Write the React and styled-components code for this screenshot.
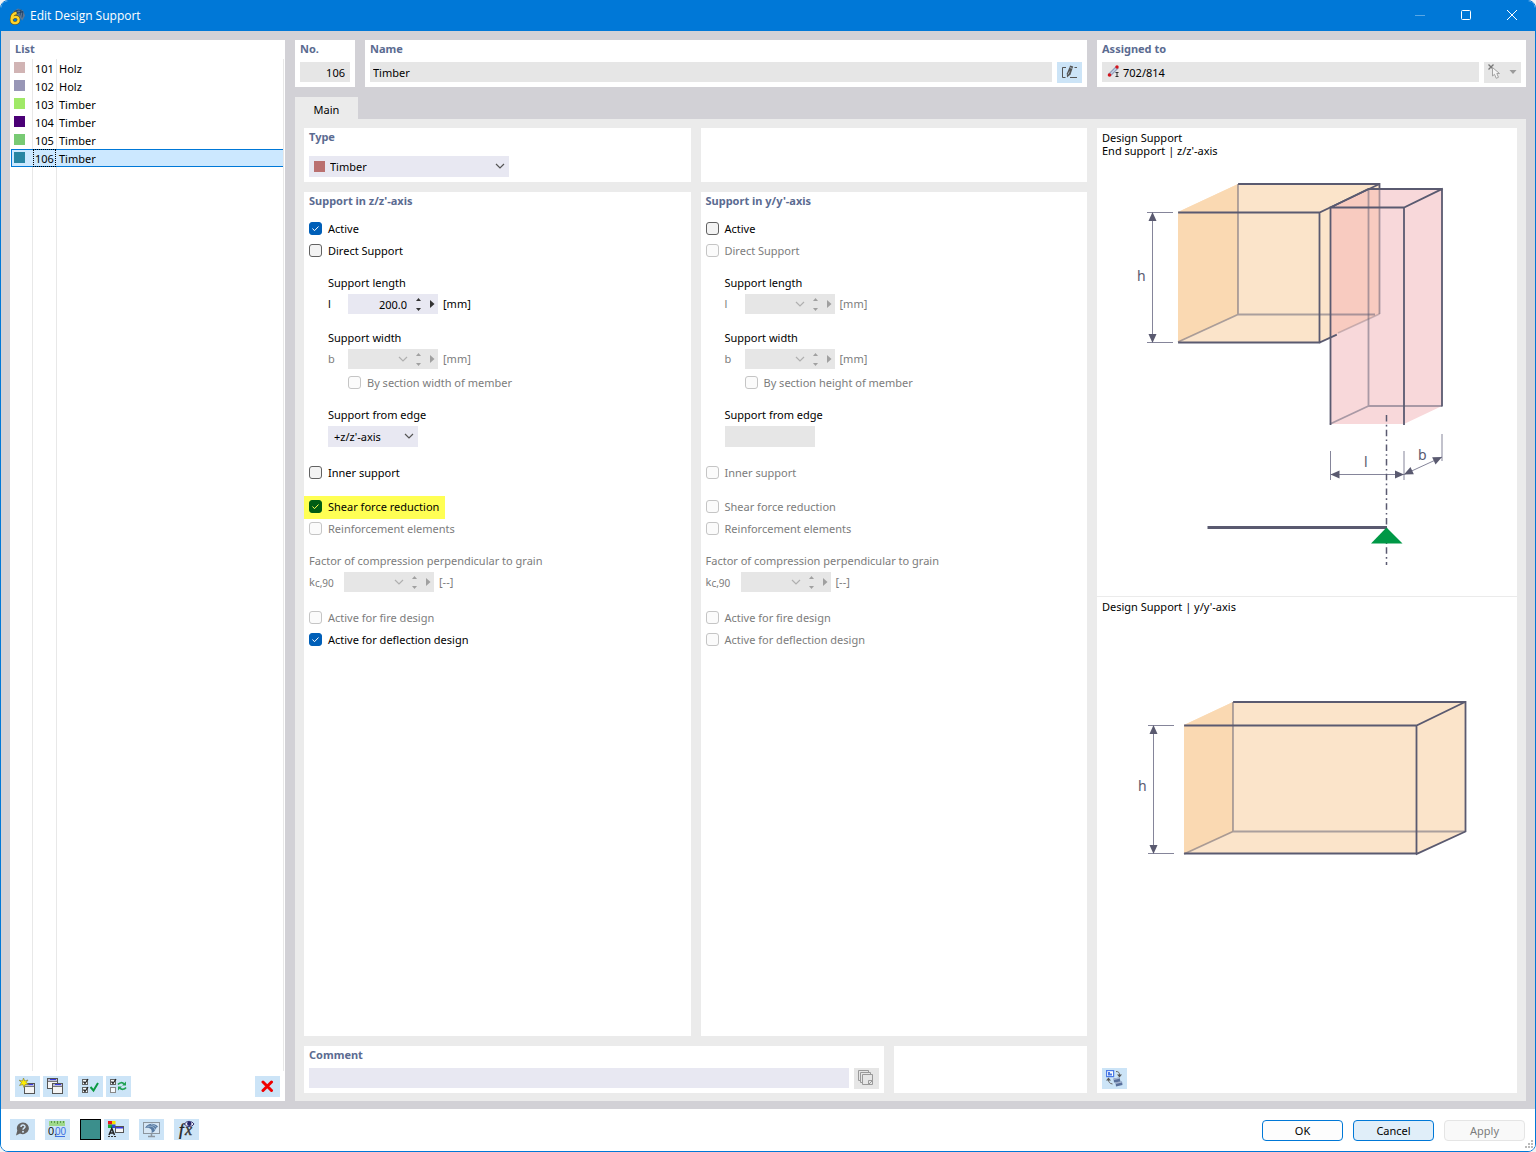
import React, { useId, useState } from "react";
import styled, { createGlobalStyle, css } from "styled-components";

const c = {
  blue: "#0078d7",
  frame: "#d2d1d6",
  page: "#ebebeb",
  title: "#5b6b91",
  field: "#e8e8f2",
  off: "#e6e6e6",
  tool: "#cce4f7",
  offText: "#7c7c7c",
  line: "#5a5a70",
};

const GlobalStyle = createGlobalStyle`
  *, *::before, *::after { box-sizing: border-box; }
  body { margin: 0; background: #f3f3f3; }
  body, input, select, button {
    font-family: "Noto Sans", "Open Sans", sans-serif;
    font-size: 11px;
    line-height: 18px;
    color: #000;
  }
  svg { display: block; flex: none; }
`;

const Window = styled.div`
  display: flex;
  flex-direction: column;
  min-height: 100vh;
  border: 1px solid ${c.blue};
  border-radius: 8px;
  background: #fff;
  overflow: hidden;
`;

const TitleBar = styled.header`
  display: flex;
  align-items: center;
  height: 30px;
  padding-left: 8px;
  background: ${c.blue};
`;

const WindowTitle = styled.h1`
  flex: 1;
  margin: 0 0 0 4px;
  font-family: "Open Sans", "Noto Sans", sans-serif;
  font-size: 12px;
  font-weight: 400;
  color: #fff;
`;

const WindowButton = styled.button`
  display: grid;
  place-items: center;
  width: 46px;
  height: 30px;
  padding: 0 0 2px;
  border: 0;
  background: none;
  color: #fff;
  opacity: ${(p) => (p.disabled ? 0.35 : 1)};
`;

const Body = styled.main`
  flex: 1;
  display: flex;
  gap: 10px;
  padding: 9px 9px 8px;
  background: ${c.frame};
`;

const Panel = styled.section`
  display: flex;
  flex-direction: column;
  min-width: 0;
  padding: 0 5px ${(p) => p.$bottom ?? 4}px;
  background: #fff;
`;

const PanelTitle = styled.h2`
  margin: 0 0 ${(p) => p.$gap ?? 4}px;
  font-size: 11px;
  line-height: 18px;
  font-weight: 700;
  color: ${c.title};
`;

const ListPanel = styled.aside`
  display: flex;
  flex-direction: column;
  flex: none;
  width: 275px;
  background: #fff;
`;

const ListTitle = styled(PanelTitle)`
  margin: 0 5px 1px;
`;

const ListBody = styled.div`
  flex: 1;
  margin: 0 1px;
  border-right: 1px solid #e8e8e8;
  background:
    linear-gradient(#e8e8e8, #e8e8e8) 21px 0 / 1px 100% no-repeat,
    linear-gradient(#e8e8e8, #e8e8e8) 45px 0 / 1px 100% no-repeat;
`;

const ListTable = styled.table`
  width: 100%;
  table-layout: fixed;
  border-spacing: 0;
`;

const ListRow = styled.tr`
  td {
    height: 18px;
    padding: 1px 0 0 2px;
    line-height: 15px;
    border: 1px solid transparent;
    border-width: 1px 0;
  }
  td:first-child {
    padding: 0 0 2px 3px;
  }
  td:last-child {
    padding-left: 3px;
  }
  ${(p) =>
    p.$selected &&
    css`
      td {
        background-color: #cce8ff;
        border-color: ${c.blue};
      }
      td:first-child {
        border-left: 1px solid ${c.blue};
        padding-left: 2px;
      }
      td:nth-child(2) {
        outline: 1px dotted #000;
        outline-offset: -1px;
      }
    `}
`;

const Swatch = styled.span`
  display: block;
  width: 11px;
  height: 11px;
  background: ${(p) => p.$color};
`;

const Toolbar = styled.div`
  display: flex;
  gap: 3px;
  padding: 5px 5px 4px;
`;

const ToolButton = styled.button`
  display: grid;
  place-items: center;
  grid-auto-flow: column;
  flex: none;
  width: ${(p) => p.$width ?? 25}px;
  height: 21px;
  padding: 0;
  border: 0;
  background: ${(p) => (p.disabled ? c.off : c.tool)};
`;

const Spacer = styled.span`
  flex: ${(p) => (p.$size ? "none" : 1)};
  width: ${(p) => p.$size ?? 0}px;
`;

const Content = styled.div`
  flex: 1;
  min-width: 0;
  display: flex;
  flex-direction: column;
`;

const HeaderRow = styled.div`
  display: grid;
  grid-template-columns: 60px minmax(0, 1fr) 429px;
  gap: 10px;
  margin-bottom: 10px;
`;

const FieldRow = styled.div`
  display: flex;
  gap: 5px;
  height: 21px;
`;

const TextField = styled.input`
  flex: 1;
  min-width: 0;
  height: 20px;
  padding: 1px 5px 0 ${(p) => p.$indent ?? 3}px;
  border: 0;
  outline: 0;
  border-radius: 0;
  text-align: ${(p) => p.$align ?? "left"};
  background: ${(p) => (p.readOnly ? c.off : c.field)};
`;

const Stack = styled.span`
  display: grid;
  flex: ${(p) => (p.$grow ? 1 : "none")};
  width: ${(p) => (p.$width ? `${p.$width}px` : "auto")};
  align-items: ${(p) => (p.$grow ? "start" : "center")};
  > * {
    grid-area: 1 / 1;
  }
  > svg,
  > span {
    pointer-events: none;
    z-index: 1;
  }
  > .start {
    justify-self: start;
    margin-left: 5px;
  }
  > .end {
    justify-self: end;
    margin: 0 4px 1px 0;
  }
`;

const Tabs = styled.div`
  display: flex;
`;

const Tab = styled.button`
  width: 63px;
  height: 22px;
  padding: 4px 0 0;
  border: 0;
  background: ${c.page};
`;

const TabPage = styled.div`
  flex: 1;
  display: grid;
  grid-template-columns: minmax(0, 1fr) 420px;
  gap: 10px;
  padding: 9px 9px 8px;
  background: ${c.page};
`;

const Forms = styled.div`
  display: grid;
  grid-template-rows: auto 1fr auto;
  gap: 10px;
`;

const Columns = styled.div`
  display: grid;
  grid-template-columns: ${(p) => p.$columns ?? "minmax(0, 1fr) minmax(0, 1fr)"};
  gap: 10px;
`;

const Group = styled.div`
  margin-top: ${(p) => p.$top ?? 12}px;
  padding-left: ${(p) => (p.$indent ? 19 : 0)}px;
`;

const GroupLabel = styled.div`
  height: 20px;
  line-height: 18px;
  color: ${(p) => (p.$off ? c.offText : "#000")};
`;

const CheckLabel = styled.label`
  display: flex;
  align-items: center;
  gap: 6px;
  width: fit-content;
  height: 22px;
  margin-left: ${(p) => p.$indent ?? 0}px;
  color: ${(p) => (p.$off ? c.offText : "#000")};
  ${(p) =>
    p.$highlight &&
    css`
      margin-left: -5px;
      padding: 0 6px 0 5px;
      background: #ffff54;
      box-shadow: 0 1px #ffff54;
    `}
`;

const CheckStack = styled(Stack)`
  margin-bottom: 1px;
`;

const CheckInput = styled.input`
  appearance: none;
  width: 13px;
  height: 13px;
  margin: 0;
  border: 1px solid #626262;
  border-radius: 3px;
  background: #f3f3f3;
  &:disabled {
    border-color: #c5c5c5;
    background: #fbfbfb;
  }
  &:checked {
    border-color: ${(p) => (p.$highlight ? "#005c14" : "#005fb8")};
    background: ${(p) => (p.$highlight ? "#005c14" : "#005fb8")};
  }
`;

const SpinRow = styled.div`
  display: flex;
  align-items: center;
  height: 20px;
  color: ${(p) => (p.$off ? c.offText : "#000")};
`;

const SpinLabel = styled.label`
  width: ${(p) => p.$width}px;
  sub {
    font-size: 10px;
    line-height: 1;
    vertical-align: -1px;
  }
`;

const SpinBox = styled.span`
  display: flex;
  width: 90px;
  height: 20px;
  margin-right: 5px;
  background: ${(p) => (p.$off ? c.off : c.field)};
`;

const SpinInput = styled.input`
  flex: 1;
  min-width: 0;
  padding: 2px 3px 0 2px;
  border: 0;
  outline: 0;
  background: none;
  text-align: right;
`;

const SpinButton = styled.button`
  display: grid;
  place-items: center;
  width: ${(p) => p.$width}px;
  padding: 0;
  border: 0;
  background: none;
  color: ${(p) => (p.disabled ? "#a0a0a0" : "#333")};
`;

const SpinPair = styled.span`
  display: grid;
  grid-template-rows: 1fr 1fr;
`;

const Select = styled.select`
  appearance: none;
  width: 100%;
  height: 21px;
  padding: 0 20px 0 ${(p) => p.$indent ?? 6}px;
  border: 0;
  border-radius: 0;
  outline: 0;
  background: ${c.field};
  &:disabled {
    background: ${c.off};
    opacity: 1;
  }
`;

const Preview = styled.section`
  display: flex;
  flex-direction: column;
  background: #fff;
`;

const Figure = styled.figure`
  display: flex;
  flex-direction: column;
  min-height: ${(p) => p.$height}px;
  margin: 0;
  border-bottom: ${(p) => (p.$divided ? `1px solid ${c.page}` : "0")};
  svg {
    align-self: center;
    margin-top: ${(p) => p.$gap}px;
  }
`;

const Caption = styled.figcaption`
  padding: 3px 5px 0;
  line-height: 13px;
`;

const PreviewTools = styled(Toolbar)`
  margin-top: auto;
`;

const Footer = styled.footer`
  display: flex;
  align-items: flex-start;
  gap: 10px;
  height: 42px;
  padding: 10px 0 10px 9px;
  background: #fff;
`;

const ColorButton = styled.button`
  width: 21px;
  height: 21px;
  margin-right: -7px;
  padding: 0;
  border: 1px solid #000;
  background: #3b8f8c;
`;

const DialogButton = styled.button`
  align-self: flex-end;
  width: 81px;
  height: 21px;
  padding: 1px 0 0;
  border: 1px solid ${(p) => (p.disabled ? "#e5e5e5" : c.blue)};
  border-radius: 4px;
  background: ${(p) => (p.disabled ? "#f9f9f9" : p.$hot ? "#e0eef9" : "#fdfdfd")};
  color: ${(p) => (p.disabled ? c.offText : "#000")};
`;

const Grip = styled.svg`
  align-self: flex-end;
  margin: 0 1px -8px -10px;
`;

/* ---------- icons ---------- */

const Chevron = ({ color = "#555", ...rest }) => (
  <svg width="10" height="6" viewBox="0 0 10 6" fill="none" stroke={color} {...rest}>
    <path d="M1 1l4 4 4-4" strokeWidth="1.200" />
  </svg>
);

const AppLogo = () => (
  <svg width="17" height="17" viewBox="0 0 17 17">
    <path d="M4 3.500l5-3 5 2 2 5-2.500 5L10 9z" fill="#5b7796" />
    <path d="M5 3.500l5-1.500 4 2m-6 1l6-1M12 1.500l-1 6m3-4l-1 6M7 2l2 4" stroke="#1d3f66" strokeWidth=".8" fill="none" />
    <path d="M7.500 5C4.500 5.500 2.500 8 2.500 11.500c0 2.400 1.200 3.600 3.500 3.600s3.600-1.400 3.600-3.300S8.300 8.800 6.400 8.800c-1.400 0-2.500.8-3.300 2" fill="none" stroke="#6a5310" strokeWidth="3.400" />
    <path d="M7.500 5C4.500 5.500 2.500 8 2.500 11.500c0 2.400 1.200 3.600 3.500 3.600s3.600-1.400 3.600-3.300S8.300 8.800 6.400 8.800c-1.400 0-2.500.8-3.300 2" fill="none" stroke="#ffd42a" strokeWidth="2.300" />
  </svg>
);

const MiniWindow = ({ x, y }) => (
  <g>
    <rect x={x + 0.5} y={y + 0.5} width="10" height="10" fill="#f4f4f4" stroke="#555" />
    <rect x={x + 1} y={y + 1} width="9" height="2" fill="#b8bcd8" />
    <rect x={x + 3} y={y + 1} width="6" height="1" fill="#3a3ae0" />
    <rect x={x + 1} y={y + 3} width="9" height="1" fill="#777" />
  </g>
);

const NewIcon = () => (
  <svg width="17" height="17" viewBox="0 0 17 17">
    <MiniWindow x={5} y={5} />
    <path d="M4.500 0l1.200 3L9 2 7.100 4.500 9.500 6.500 6.200 6.500 5 9.500 3.800 6.500.5 7.500l2-3L0 2.200 3.500 3z" fill="#ffee00" stroke="#8a8440" strokeWidth=".7" />
  </svg>
);

const CopyIcon = () => (
  <svg width="17" height="17" viewBox="0 0 17 17">
    <MiniWindow x={0} y={0} />
    <MiniWindow x={5} y={5} />
  </svg>
);

const Box = ({ y, on }) => (
  <g fill="none">
    <rect x=".5" y={y + 0.5} width="5" height="5" fill="#f4f9fd" stroke={on ? "#666" : "#888"} />
    {on && <path d={`M1.500 ${y + 2.5}l1.500 2L6 ${y}`} stroke="#222" strokeWidth="1.300" />}
  </g>
);

const CheckAllIcon = () => (
  <svg width="17" height="17" viewBox="0 0 17 17">
    <Box y={1} on />
    <Box y={9} on />
    <path d="M8.500 9l3 3.500 4.500-7.500" fill="none" stroke="#0d9a43" strokeWidth="2" />
  </svg>
);

const InvertIcon = () => (
  <svg width="17" height="17" viewBox="0 0 17 17">
    <Box y={1} on />
    <Box y={9} />
    <path d="M8 6.500c1.500-2 4.500-2.500 6-.5M16 9.500c-1.500 2-4.500 2.500-6 .5" fill="none" stroke="#1fa052" strokeWidth="1.700" />
    <path d="M16 3.500v4h-4zM8 12.500v-4h4z" fill="#1fa052" />
  </svg>
);

const DeleteIcon = () => (
  <svg width="13" height="13" viewBox="0 0 13 13">
    <path d="M2 2l8.500 8.500M10.500 2L2 10.500" stroke="#f00000" strokeWidth="3" strokeLinecap="round" />
  </svg>
);

const RenameIcon = () => (
  <svg width="15" height="15" viewBox="0 0 15 15">
    <path d="M4 2.500H.5v10h3M12.500 2.500H15M8 12.500h7" fill="none" stroke="#555" />
    <path d="M8.200.5l3 1-2.700 8L5 12.500l-.2-4z" fill="#555" />
    <path d="M7.700 2.500l3 1M7.500 6.500L6 9.500" stroke="#b5c8d8" strokeWidth=".8" />
  </svg>
);

const MemberIcon = (props) => (
  <svg width="13" height="19" viewBox="0 -3 13 19" {...props}>
    <path d="M2.500 10l8-8" stroke="#8d9cb8" strokeWidth="3.500" />
    <path d="M2.500 10l8-8" stroke="#c4cfe2" strokeWidth="1.500" />
    <circle cx="2.500" cy="10" r="1.800" fill="#d4141c" />
    <circle cx="10" cy="2" r="1.700" fill="#d4141c" />
    <path d="M8.500 7.500h3M10 7.500v4M8.500 11.500h3" stroke="#333" />
  </svg>
);

const PickIcon = () => (
  <svg width="14" height="17" viewBox="0 0 14 17">
    <path d="M.5.5l5 5M5.500.5l-5 5" stroke="#777" strokeWidth="1.300" />
    <path d="M4.500 3.500v8.500l2-1.700 1.700 4 2.300-1-1.700-3.800h2.700z" fill="#f4f4f4" stroke="#a2a2a2" />
  </svg>
);

const TriangleDown = () => (
  <svg width="8" height="5" viewBox="0 0 8 5">
    <path d="M.5 0h7L4 4z" fill="#9a9a9a" />
  </svg>
);

const CommentIcon = () => (
  <svg width="17" height="17" viewBox="0 0 17 17" fill="#e6e6e6" stroke="#999">
    <path d="M.5.5h10v10H.5z" />
    <path d="M2.500 2.500h10v10h-10z" />
    <path d="M4.500 4.500h10v10h-10z" />
    <path d="M10.500 14.500v-4h4M11 14l3-3" />
  </svg>
);

const SwitchViewIcon = () => (
  <svg width="17" height="17" viewBox="0 0 17 17">
    <rect x=".6" y=".6" width="7" height="6" fill="#fff" stroke="#4b7be5" strokeWidth="1.200" />
    <path d="M2 2h2v1.500h2V5.500H2z" fill="#4b7be5" />
    <path d="M10 1.500c2.500 0 3.500 1 3.500 3.500M2.500 9.500c0 2.500 1 4 4 4.500" fill="none" stroke="#666" />
    <path d="M11 4.500h5l-2.500 3zM0 10.500h5L2.500 7.500z" fill="#555" />
    <path d="M7.500 8.500l6-1 1 4-6.500 1zM9.500 12.500l6.500-1 .5 3.500-6.500 1.500z" fill="#58709c" />
    <path d="M7.500 8.500l6-1v1.200l-6 1.300zM9.500 12.500l6.500-1v1L9.500 14z" fill="#a9b8d4" />
  </svg>
);

const HelpIcon = () => (
  <svg width="15" height="17" viewBox="0 0 15 17">
    <path d="M8 1.500a6 5.800 0 1 1-3 10.900L1 14.500 2.300 9.500A6 5.800 0 0 1 8 1.500z" fill="#636363" />
    <path d="M6 6c0-2.500 4-2.500 4-.2 0 1.300-2 1.400-2 3" fill="none" stroke="#cfe4f5" strokeWidth="1.500" />
    <circle cx="8" cy="10.800" r="1" fill="#cfe4f5" />
  </svg>
);

const UnitsIcon = () => (
  <svg width="19" height="17" viewBox="0 0 19 17">
    <rect x="1" y="0" width="16" height="5" fill="#9ed98b" />
    <path d="M3.500 0v2M6.500 0v2M9.500 0v3M12.500 0v2M15.500 0v2" stroke="#5c9a4d" />
    <text x="0" y="14" fontSize="11" fontFamily="Liberation Sans" fill="#111">0,</text>
    <text x="7" y="14" fontSize="10" fontFamily="Liberation Sans" fill="#3d6fe0">00</text>
    <path d="M7 15.500h10" stroke="#3d6fe0" />
  </svg>
);

const DisplayIcon = () => (
  <svg width="17" height="17" viewBox="0 0 17 17">
    <path d="M0 0h4v3.500H0z" fill="#e8141c" />
    <path d="M4 0h3.500v3.500H4z" fill="#f6e000" />
    <path d="M0 3.500h4V7H0z" fill="#16a93b" />
    <path d="M4 3.500h3.500V7H4z" fill="#2a47d8" />
    <path d="M1 14L3.800 7.500 6.500 14M2 12h4" stroke="#222" strokeWidth="1.500" fill="none" />
    <path d="M0 15.500h8" stroke="#333" strokeDasharray="2 1" />
    <rect x="7.500" y="5.500" width="8" height="6" fill="#f6f6f6" stroke="#555" />
    <path d="M8 6h7v1.500H8z" fill="#3a3ae0" />
  </svg>
);

const MonitorIcon = () => (
  <svg width="17" height="17" viewBox="0 0 17 17">
    <rect x=".5" y="1.500" width="16" height="11" fill="#d6e6f4" stroke="#8b959e" />
    <path d="M8.500 13v2.500M5 15.500h7" stroke="#8b959e" strokeWidth="1.500" />
    <path d="M2 7c3-5 9-5.500 13-1.500L12.500 8c0 1.500-1.500 3-4 4 1-3-1-6-6.500-5z" fill="#587ba3" />
    <path d="M4.500 5.500c4-1 7 .5 7.500 3.500M8 3.500c2.500.5 4.500 1.500 5.500 3" stroke="#bcd0e4" strokeWidth=".7" fill="none" />
  </svg>
);

const FormulaIcon = () => (
  <svg width="19" height="19" viewBox="0 0 19 19">
    <text x="2" y="15" fontSize="17" fontStyle="italic" fontFamily="Liberation Serif" fill="#222" stroke="#222" strokeWidth=".4">f</text>
    <text x="8" y="15" fontSize="16" fontStyle="italic" fontFamily="Liberation Serif" fill="#333" stroke="#333" strokeWidth=".4">x</text>
    <path d="M7.500 4c2-3.500 7-3.500 9.500 0-2.500 3.500-7.500 3.500-9.500 0z" fill="#eef0fa" stroke="#33346e" />
    <circle cx="12.300" cy="3.700" r="2.200" fill="#26266a" />
  </svg>
);

/* ---------- drawings ---------- */

const Arrow = ({ at, angle }) => (
  <path d="M0 0L-9 -4V4z" fill={c.line} transform={`translate(${at}) rotate(${angle})`} />
);

const edge = { fill: "none", stroke: c.line, strokeWidth: 1.8, strokeLinecap: "square" };
const faint = { fill: "none", stroke: c.line, strokeWidth: 1.8, opacity: 0.5 };
const thin = { fill: "none", stroke: "#85859a", strokeWidth: 1 };
const letter = { fontSize: 14, fill: c.line };

const EndSupportDrawing = () => (
  <svg width="420" height="420" viewBox="1097 160 420 420" role="img" aria-label="End support">
    <path d="M1178 212L1238 184H1380V314L1320 342H1178z" fill="#fbe4ca" />
    <path d="M1178 212L1238 184V314L1178 342z" fill="#fad9b2" />
    <path d="M1330 207L1369 189H1442V406L1404 424H1330z" fill="#f8d8da" />
    <path d="M1330 207L1369 189H1380V314L1330 337z" fill="#f8cbc0" />
    <path d="M1178 342L1238 314.500V184M1238 314.500H1375M1379.500 189V314" {...faint} />
    <path d="M1379.500 314L1338 333" {...faint} opacity={0.3} />
    <path d="M1330 424L1368.500 406V190M1368.500 406H1442" {...faint} />
    <path d="M1179 212.500H1319.500V342.500H1179M1319.500 212.500L1379.500 184H1239M1379.500 184V188M1319.500 342.500L1336 335" {...edge} />
    <path d="M1330.500 424V207.500L1368.500 189H1442V405.500M1330.500 207.500H1404V424M1404 207.500L1442 189" {...edge} />
    <path d="M1147 212.500H1173M1147 342.500H1173M1152.500 213V342" {...thin} />
    <Arrow at="1152.500 212" angle={-90} />
    <Arrow at="1152.500 343" angle={90} />
    <text x="1137" y="281" {...letter}>h</text>
    <path d="M1330.500 451V480M1404 451V480M1442 434V461M1331 474.500H1404L1442 457" {...thin} />
    <Arrow at="1330.500 474.500" angle={180} />
    <Arrow at="1404 474.500" angle={0} />
    <Arrow at="1404 474.500" angle={155} />
    <Arrow at="1442 457" angle={-25} />
    <text x="1364" y="467" {...letter}>l</text>
    <text x="1418" y="460" {...letter}>b</text>
    <path d="M1386.500 415V565" stroke={c.line} strokeWidth="1.500" strokeDasharray="6.500 3.300 1.600 3.300" fill="none" />
    <path d="M1207.500 527.500H1387" stroke={c.line} strokeWidth="3" />
    <path d="M1386.500 527.500L1371 543.500H1402.500z" fill="#009846" />
  </svg>
);

const BeamDrawing = () => (
  <svg width="420" height="200" viewBox="1097 680 420 200" role="img" aria-label="Beam">
    <path d="M1184 725L1233 702H1465V832L1417 854H1184z" fill="#fbe4ca" />
    <path d="M1184 725L1233 702V832L1184 854z" fill="#fad9b2" />
    <path d="M1184 854L1233 831.500V702M1233 831.500H1465" {...faint} />
    <path d="M1185 725.500H1416.500V853.500H1185M1416.500 725.500L1465 702H1234M1465.500 702V831.500L1416.500 854" {...edge} />
    <path d="M1148 725.500H1174M1148 853.500H1174M1153.500 726V853" {...thin} />
    <Arrow at="1153.500 725" angle={-90} />
    <Arrow at="1153.500 854" angle={90} />
    <text x="1138" y="791" {...letter}>h</text>
  </svg>
);

/* ---------- form parts ---------- */

function Check({ label, defaultChecked = false, disabled, highlight, indent }) {
  const [on, setOn] = useState(defaultChecked);
  return (
    <CheckLabel $off={disabled} $highlight={highlight} $indent={indent}>
      <CheckStack>
        <CheckInput
          type="checkbox"
          checked={on}
          disabled={disabled}
          $highlight={highlight}
          onChange={(e) => setOn(e.target.checked)}
        />
        {on && (
          <svg width="13" height="13" viewBox="0 0 13 13" fill="none" stroke={highlight ? "#ffff54" : "#fff"}>
            <path d="M3.500 6.500l2 2.200 4-4.200" />
          </svg>
        )}
      </CheckStack>
      {label}
    </CheckLabel>
  );
}

function Spin({ symbol, unit, value = "", disabled, labelWidth = 20 }) {
  const id = useId();
  return (
    <SpinRow $off={disabled}>
      <SpinLabel htmlFor={id} $width={labelWidth}>{symbol}</SpinLabel>
      <SpinBox $off={disabled}>
        <SpinInput id={id} defaultValue={value} disabled={disabled} />
        {disabled && (
          <SpinButton $width={14} disabled aria-label="Values">
            <Chevron color="#b0b0b0" />
          </SpinButton>
        )}
        <SpinPair>
          <SpinButton $width={17} disabled={disabled} aria-label="Increase">
            <svg width="5" height="3" viewBox="0 0 5 3"><path d="M0 3h5L2.500 0z" fill="currentColor" /></svg>
          </SpinButton>
          <SpinButton $width={17} disabled={disabled} aria-label="Decrease">
            <svg width="5" height="3" viewBox="0 0 5 3"><path d="M0 0h5L2.500 3z" fill="currentColor" /></svg>
          </SpinButton>
        </SpinPair>
        <SpinButton $width={11} disabled={disabled} aria-label="More">
          <svg width="5" height="8" viewBox="0 0 5 8"><path d="M0 0v8l4.500-4z" fill="currentColor" /></svg>
        </SpinButton>
      </SpinBox>
      {unit}
    </SpinRow>
  );
}

function SupportPanel({ axis, section, active }) {
  const off = !active;
  return (
    <Panel>
      <PanelTitle $gap={8}>Support in {axis}-axis</PanelTitle>
      <Check label="Active" defaultChecked={active} />
      <Check label="Direct Support" disabled={off} />
      <Group $indent>
        <GroupLabel>Support length</GroupLabel>
        <Spin symbol="l" unit="[mm]" value={active ? "200.0" : ""} disabled={off} />
      </Group>
      <Group $indent $top={15}>
        <GroupLabel>Support width</GroupLabel>
        <Spin symbol="b" unit="[mm]" disabled />
      </Group>
      <Group $indent $top={3}>
        <Check label={`By section ${section} of member`} disabled indent={20} />
      </Group>
      <Group $indent>
        <GroupLabel>Support from edge</GroupLabel>
        <Stack $width={90}>
          <Select disabled={off} aria-label="Support from edge">
            <option>{active ? `+${axis}-axis` : ""}</option>
          </Select>
          {active && <Chevron className="end" />}
        </Stack>
      </Group>
      <Group $top={15}>
        <Check label="Inner support" disabled={off} />
      </Group>
      <Group>
        <Check label="Shear force reduction" defaultChecked={active} highlight={active} disabled={off} />
        <Check label="Reinforcement elements" disabled />
      </Group>
      <Group>
        <GroupLabel $off>Factor of compression perpendicular to grain</GroupLabel>
        <Spin symbol={<>k<sub>c,90</sub></>} unit="[--]" labelWidth={35} disabled />
      </Group>
      <Group $top={15}>
        <Check label="Active for fire design" disabled />
        <Check label="Active for deflection design" defaultChecked={active} disabled={off} />
      </Group>
    </Panel>
  );
}

const supports = [
  { no: 101, name: "Holz", color: "#d1b4b4" },
  { no: 102, name: "Holz", color: "#9896b6" },
  { no: 103, name: "Timber", color: "#a0e967" },
  { no: 104, name: "Timber", color: "#4b0076" },
  { no: 105, name: "Timber", color: "#78ca74" },
  { no: 106, name: "Timber", color: "#2785a3" },
];

export default function App() {
  const [selected, setSelected] = useState(106);
  return (
    <>
      <GlobalStyle />
      <Window>
        <TitleBar>
          <AppLogo />
          <WindowTitle>Edit Design Support</WindowTitle>
          <WindowButton disabled aria-label="Minimize">
            <svg width="10" height="10" viewBox="0 0 10 10" stroke="currentColor"><path d="M0 5.500h10" /></svg>
          </WindowButton>
          <WindowButton aria-label="Maximize">
            <svg width="10" height="10" viewBox="0 0 10 10" fill="none" stroke="currentColor"><rect x=".5" y=".5" width="9" height="9" rx="1" /></svg>
          </WindowButton>
          <WindowButton aria-label="Close">
            <svg width="12" height="12" viewBox="0 0 12 12" stroke="currentColor"><path d="M1 1l10 10M11 1L1 11" /></svg>
          </WindowButton>
        </TitleBar>

        <Body>
          <ListPanel>
            <ListTitle>List</ListTitle>
            <ListBody>
              <ListTable>
                <colgroup>
                  <col width="22" />
                  <col width="23" />
                  <col />
                </colgroup>
                <tbody>
                  {supports.map((s) => (
                    <ListRow key={s.no} $selected={s.no === selected} onClick={() => setSelected(s.no)}>
                      <td><Swatch $color={s.color} /></td>
                      <td>{s.no}</td>
                      <td>{s.name}</td>
                    </ListRow>
                  ))}
                </tbody>
              </ListTable>
            </ListBody>
            <Toolbar>
              <ToolButton aria-label="New"><NewIcon /></ToolButton>
              <ToolButton aria-label="Copy"><CopyIcon /></ToolButton>
              <Spacer $size={4} />
              <ToolButton aria-label="Check all"><CheckAllIcon /></ToolButton>
              <ToolButton aria-label="Invert selection"><InvertIcon /></ToolButton>
              <Spacer />
              <ToolButton aria-label="Delete"><DeleteIcon /></ToolButton>
            </Toolbar>
          </ListPanel>

          <Content>
            <HeaderRow>
              <Panel>
                <PanelTitle as="label" htmlFor="support-no">No.</PanelTitle>
                <FieldRow><TextField id="support-no" readOnly value="106" $align="right" /></FieldRow>
              </Panel>
              <Panel>
                <PanelTitle as="label" htmlFor="support-name">Name</PanelTitle>
                <FieldRow>
                  <TextField id="support-name" readOnly value="Timber" />
                  <ToolButton aria-label="Edit name"><RenameIcon /></ToolButton>
                </FieldRow>
              </Panel>
              <Panel>
                <PanelTitle as="label" htmlFor="assigned">Assigned to</PanelTitle>
                <FieldRow>
                  <Stack $grow>
                    <TextField id="assigned" readOnly value="702/814" $indent={21} />
                    <MemberIcon className="start" />
                  </Stack>
                  <ToolButton disabled $width={37} aria-label="Pick objects">
                    <PickIcon />
                    <TriangleDown />
                  </ToolButton>
                </FieldRow>
              </Panel>
            </HeaderRow>

            <Tabs role="tablist"><Tab role="tab" aria-selected="true">Main</Tab></Tabs>

            <TabPage>
              <Forms>
                <Columns>
                  <Panel $bottom={5}>
                    <PanelTitle $gap={10} as="label" htmlFor="support-type">Type</PanelTitle>
                    <Stack $width={200}>
                      <Select id="support-type" $indent={21}><option>Timber</option></Select>
                      <Swatch className="start" $color="#ba7070" />
                      <Chevron className="end" />
                    </Stack>
                  </Panel>
                  <Panel />
                </Columns>
                <Columns>
                  <SupportPanel axis="z/z'" section="width" active />
                  <SupportPanel axis="y/y'" section="height" active={false} />
                </Columns>
                <Columns $columns="minmax(0, 3fr) minmax(0, 1fr)">
                  <Panel>
                    <PanelTitle as="label" htmlFor="comment">Comment</PanelTitle>
                    <FieldRow>
                      <TextField id="comment" />
                      <ToolButton disabled aria-label="Comment templates"><CommentIcon /></ToolButton>
                    </FieldRow>
                  </Panel>
                  <Panel />
                </Columns>
              </Forms>

              <Preview>
                <Figure $height={469} $divided $gap={3}>
                  <Caption>Design Support<br />End support | z/z'-axis</Caption>
                  <EndSupportDrawing />
                </Figure>
                <Figure $gap={67}>
                  <Caption>Design Support | y/y'-axis</Caption>
                  <BeamDrawing />
                </Figure>
                <PreviewTools>
                  <ToolButton aria-label="Switch view"><SwitchViewIcon /></ToolButton>
                </PreviewTools>
              </Preview>
            </TabPage>
          </Content>
        </Body>

        <Footer>
          <ToolButton aria-label="Help"><HelpIcon /></ToolButton>
          <ToolButton aria-label="Units"><UnitsIcon /></ToolButton>
          <ColorButton aria-label="Color" />
          <ToolButton aria-label="Display properties"><DisplayIcon /></ToolButton>
          <ToolButton aria-label="View"><MonitorIcon /></ToolButton>
          <ToolButton aria-label="Formula"><FormulaIcon /></ToolButton>
          <Spacer />
          <DialogButton>OK</DialogButton>
          <DialogButton $hot>Cancel</DialogButton>
          <DialogButton disabled>Apply</DialogButton>
          <Grip width="9" height="9" viewBox="0 0 9 9" fill="#bbb">
            <path d="M6 0h2v2H6zM3 3h2v2H3zM6 3h2v2H6zM0 6h2v2H0zM3 6h2v2H3zM6 6h2v2H6z" />
          </Grip>
        </Footer>
      </Window>
    </>
  );
}
